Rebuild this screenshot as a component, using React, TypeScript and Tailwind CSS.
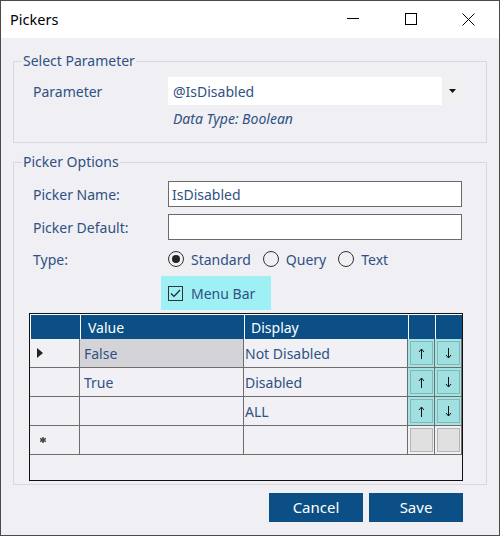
import React from "react";

const rows = [
  { value: "False", display: "Not Disabled", marker: "current", selected: true },
  { value: "True", display: "Disabled", marker: "", selected: false },
  { value: "", display: "ALL", marker: "", selected: false },
];

const Radio = ({ checked, label }: { checked?: boolean; label: string }) => (
  <div className="flex items-center gap-[7px]">
    <span className="flex h-[16px] w-[16px] items-center justify-center rounded-full border-[1.5px] border-[#333]">
      {checked && <span className="h-[8px] w-[8px] rounded-full bg-[#222]" />}
    </span>
    <span>{label}</span>
  </div>
);

const Arrow = ({ dir }: { dir: "up" | "down" }) => (
  <svg width="7" height="11" viewBox="0 0 7 11">
    {dir === "up" ? (
      <path d="M3.5 1 L3.5 11 M1 4 L3.5 1 L6 4" fill="none" stroke="#111" strokeWidth="1" />
    ) : (
      <path d="M3.5 0 L3.5 10 M1 7 L3.5 10 L6 7" fill="none" stroke="#111" strokeWidth="1" />
    )}
  </svg>
);

const MoveButton = ({ dir, empty }: { dir?: "up" | "down"; empty?: boolean }) => (
  <div
    className={`flex h-[28px] items-center justify-center border-r border-[#6d6d6d] ${
      empty ? "bg-[#f0f0f5]" : "bg-[#a6e3e3]"
    }`}
  >
    <div
      className={`flex h-[24px] w-[23px] items-center justify-center border ${
        empty ? "border-[#b4b4b4] bg-[#e0e0e0]" : "border-[#7fb8b8] bg-[#a0e0e0]"
      }`}
    >
      {dir && <Arrow dir={dir} />}
    </div>
  </div>
);

export default function App() {
  return (
    <div
      className="flex h-[536px] w-[500px] flex-col border border-[#4a4a4a] bg-[#efeff4] text-[14px] text-[#2f5183]"
      style={{ fontFamily: '"Noto Sans", "Open Sans", sans-serif' }}
    >
      {/* title bar */}
      <div className="flex h-[37px] items-center bg-white pl-[9px] text-black">
        <span className="text-[14.5px]">Pickers</span>
        <div className="ml-auto flex items-center">
          <svg width="58" height="37" viewBox="0 0 58 37">
            <line x1="22" y1="17.5" x2="34" y2="17.5" stroke="#000" strokeWidth="1" />
          </svg>
          <svg width="58" height="37" viewBox="0 0 58 37">
            <rect x="22.5" y="12.5" width="11" height="11" fill="none" stroke="#000" strokeWidth="1" />
          </svg>
          <svg width="58" height="37" viewBox="0 0 58 37">
            <path d="M21.5 12.5 L33.5 24.5 M33.5 12.5 L21.5 24.5" stroke="#000" strokeWidth="1" />
          </svg>
        </div>
      </div>

      <div className="px-[12px]">
        {/* select parameter */}
        <fieldset className="mt-[13px] border border-[#d7d7dc] px-[8px] pb-[13px]">
          <legend className="px-[1px] text-[14px] leading-[20px]">Select Parameter</legend>
          <div className="mt-[6px] flex items-center pl-[11px]">
            <span className="w-[135px]">Parameter</span>
            <div className="flex h-[28px] w-[294px] items-center bg-white pl-[5px]">
              <span>@IsDisabled</span>
              <div className="ml-auto flex h-full w-[20px] items-center justify-center bg-[#f0f0f0]">
                <svg width="7" height="4" viewBox="0 0 7 4">
                  <path d="M0 0 L7 0 L3.5 4 Z" fill="#111" />
                </svg>
              </div>
            </div>
          </div>
          <div className="mt-[4px] pl-[151px] italic leading-[20px]">Data Type: Boolean</div>
        </fieldset>

        {/* picker options */}
        <fieldset className="mt-[9px] border border-[#d7d7dc] px-[8px] pb-[3px]">
          <legend className="px-[1px] text-[14px] leading-[20px]">Picker Options</legend>
          <div className="mt-[9px] flex items-center pl-[11px]">
            <span className="w-[135px]">Picker Name:</span>
            <div className="flex h-[26px] w-[294px] items-center border border-[#6a6a6a] bg-white pl-[3px]">
              IsDisabled
            </div>
          </div>
          <div className="mt-[7px] flex items-center pl-[11px]">
            <span className="w-[135px]">Picker Default:</span>
            <div className="h-[26px] w-[294px] border border-[#6a6a6a] bg-white" />
          </div>
          <div className="mt-[9px] flex h-[20px] items-center pl-[11px]">
            <span className="w-[135px]">Type:</span>
            <div className="flex items-center gap-[12px]">
              <Radio checked label="Standard" />
              <Radio label="Query" />
              <Radio label="Text" />
            </div>
          </div>
          <div className="mt-[7px] ml-[139px] flex h-[34px] w-[110px] items-center gap-[8px] bg-[#9ff0f4] pl-[7px]">
            <span className="flex h-[15px] w-[15px] items-center justify-center border border-[#333]">
              <svg width="11" height="9" viewBox="0 0 11 9">
                <path d="M1 4.5 L4 7.5 L10 1" fill="none" stroke="#222" strokeWidth="1.2" />
              </svg>
            </span>
            <span>Menu Bar</span>
          </div>

          {/* grid */}
          <div className="mt-[3px] ml-[7px] h-[168px] w-[434px] border border-[#111] bg-[#f0f0f5]">
            <div className="grid h-[25px] grid-cols-[50px_164px_164px_27px_27px] border-t border-l border-white bg-[#0b4f86] text-white">
              <div className="border-r border-white" />
              <div className="flex items-center border-r border-white pl-[7px]">Value</div>
              <div className="flex items-center border-r border-white pl-[6px]">Display</div>
              <div className="border-r border-white" />
              <div />
            </div>
            {rows.map((r, i) => (
              <div key={i} className="grid h-[29px] grid-cols-[50px_164px_164px_27px_27px] border-b border-[#6d6d6d]">
                <div className="flex items-center border-r border-[#6d6d6d] pl-[7px]">
                  {r.marker === "current" && (
                    <svg width="6" height="10" viewBox="0 0 6 10">
                      <path d="M0 0 L6 5 L0 10 Z" fill="#222" />
                    </svg>
                  )}
                </div>
                <div
                  className={`flex items-center border-r border-[#6d6d6d] pl-[4px] ${
                    r.selected ? "bg-[#d4d4d8]" : ""
                  }`}
                >
                  {r.value}
                </div>
                <div className="flex items-center border-r border-[#6d6d6d] pl-[1px]">{r.display}</div>
                <MoveButton dir="up" />
                <MoveButton dir="down" />
              </div>
            ))}
            <div className="grid h-[29px] grid-cols-[50px_164px_164px_27px_27px] border-b border-[#6d6d6d]">
              <div className="flex items-center border-r border-[#6d6d6d] pl-[10px]">
                <svg width="6" height="6" viewBox="0 0 6 6">
                  <path d="M3 0 L3 6 M0 1.5 L6 4.5 M0 4.5 L6 1.5" stroke="#444" strokeWidth="1.5" />
                </svg>
              </div>
              <div className="border-r border-[#6d6d6d]" />
              <div className="border-r border-[#6d6d6d]" />
              <MoveButton empty />
              <MoveButton empty />
            </div>
          </div>
        </fieldset>

        {/* buttons */}
        <div className="mt-[8px] flex justify-end gap-[6px] pr-[24px]">
          <button className="h-[29px] w-[94px] bg-[#0b4f86] text-[15px] text-white">Cancel</button>
          <button className="h-[29px] w-[94px] bg-[#0b4f86] text-[15px] text-white">Save</button>
        </div>
      </div>
    </div>
  );
}
